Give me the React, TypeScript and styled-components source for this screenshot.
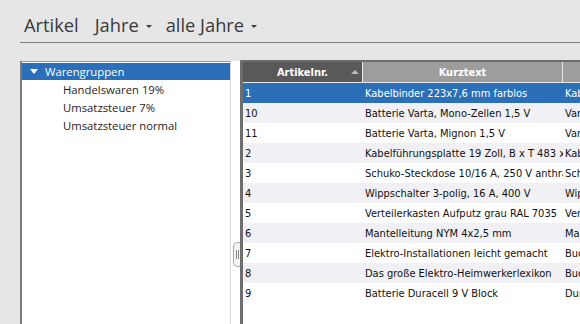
import React from "react";
import styled, { createGlobalStyle } from "styled-components";

const GlobalStyle = createGlobalStyle`
  html, body {
    margin: 0;
    padding: 0;
    background: #e6e6e6;
    overflow: hidden;
  }
`;

const Page = styled.div`
  width: 580px;
  height: 324px;
  display: flex;
  flex-direction: column;
  background: #e6e6e6;
`;

const TitleBar = styled.div`
  margin-left: 20px;
  height: 43px;
  border-bottom: 1px solid #7f7f7f;
  display: flex;
  align-items: flex-end;
  padding-left: 4px;
  padding-bottom: 4px;
  box-sizing: border-box;
  font-family: "Open Sans", "Noto Sans", sans-serif;
  font-size: 18.3px;
  color: #3a3a3a;
  gap: 14px;
`;

const Title = styled.span`
  line-height: 26px;
  margin-right: 2px;
`;

const Dropdown = styled.span`
  display: flex;
  align-items: center;
  gap: 7px;
  line-height: 26px;
`;

const Caret = styled.span`
  width: 0;
  height: 0;
  border-left: 3px solid transparent;
  border-right: 3px solid transparent;
  border-top: 3px solid #3a3a3a;
  margin-top: 2px;
`;

const Body = styled.div`
  flex: 1;
  margin-top: 17px;
  margin-left: 20px;
  display: flex;
  min-height: 0;
`;

const TreePanel = styled.div`
  width: 208px;
  margin-top: 1px;
  background: #fff;
  border-left: 2px solid #7c7c7c;
  border-top: 1px solid #9a9a9a;
  border-right: 1px solid #d6d6d6;
  font-family: "Open Sans", "Noto Sans", sans-serif;
  font-size: 11.3px;
  color: #2a1a1a;
  padding-top: 1px;
`;

const TreeNode = styled.div<{ $selected?: boolean; $level: number }>`
  height: ${(p) => (p.$selected ? 17 : 18)}px;
  display: flex;
  align-items: center;
  padding-left: ${(p) => (p.$level === 0 ? 8 : 41)}px;
  gap: 7px;
  background: ${(p) => (p.$selected ? "#2a6fb7" : "transparent")};
  color: ${(p) => (p.$selected ? "#fff" : "inherit")};
  white-space: nowrap;
`;

const Expander = styled.span`
  width: 0;
  height: 0;
  border-left: 4px solid transparent;
  border-right: 4px solid transparent;
  border-top: 5px solid #fff;
`;

const Splitter = styled.div`
  width: 9px;
  margin-top: 1px;
  background: #fff;
  display: flex;
  flex-direction: column;
  padding-top: 181px;
  box-sizing: border-box;
`;

const Grip = styled.div`
  width: 8px;
  height: 23px;
  margin-left: 2px;
  border: 1px solid #a8a8a8;
  border-right: none;
  border-radius: 5px 0 0 5px;
  background: #f4f4f4;
  display: flex;
  align-items: center;
  justify-content: center;
  gap: 1px;
`;

const GripLine = styled.span`
  width: 1px;
  height: 9px;
  background: #8a8a8a;
`;

const TablePanel = styled.div`
  flex: 1;
  background: #fff;
  border-left: 3px solid #6e6e6e;
  border-top: 2px solid #6e6e6e;
  overflow: hidden;
  font-family: "DejaVu Sans Condensed", "DejaVu Sans", sans-serif;
  font-size: 11px;
`;

const Grid = styled.div`
  display: grid;
  grid-template-columns: 120px 200px 200px;
`;

const HeaderCell = styled.div<{ $sorted?: boolean }>`
  height: 21px;
  box-sizing: border-box;
  background: ${(p) => (p.$sorted ? "#595959" : "#9d9d9d")};
  border-right: 1px solid #e8e8e8;
  border-bottom: 1px solid #e8e8e8;
  color: #fff;
  font-weight: bold;
  display: flex;
  align-items: center;
  justify-content: center;
  position: relative;
`;

const SortArrow = styled.span`
  position: absolute;
  right: 3px;
  top: 8px;
  width: 0;
  height: 0;
  border-left: 4px solid transparent;
  border-right: 4px solid transparent;
  border-bottom: 4px solid #bdbdbd;
`;

const Cell = styled.div<{ $selected?: boolean; $alt?: boolean }>`
  height: 20px;
  padding-left: 2px;
  display: flex;
  align-items: center;
  white-space: nowrap;
  overflow: hidden;
  background: ${(p) => (p.$selected ? "#2a6fb7" : p.$alt ? "#f0f0f5" : "#fff")};
  color: ${(p) => (p.$selected ? "#fff" : "#111")};
`;

const rows: [string, string, string][] = [
  ["1", "Kabelbinder 223x7,6 mm farblos", "Kabelbinder"],
  ["10", "Batterie Varta, Mono-Zellen 1,5 V", "Varta"],
  ["11", "Batterie Varta, Mignon 1,5 V", "Varta"],
  ["2", "Kabelführungsplatte 19 Zoll,  B x T 483 x 44 mm", "Kabelführung"],
  ["3", "Schuko-Steckdose 10/16 A, 250 V anthrazit", "Schuko"],
  ["4", "Wippschalter 3-polig, 16 A, 400 V", "Wippschalter"],
  ["5", "Verteilerkasten Aufputz grau RAL 7035", "Verteiler"],
  ["6", "Mantelleitung NYM 4x2,5 mm", "Mantelleitung"],
  ["7", "Elektro-Installationen leicht gemacht", "Buch"],
  ["8", "Das große Elektro-Heimwerkerlexikon", "Buch"],
  ["9", "Batterie Duracell 9 V Block", "Duracell"],
];

export default function App() {
  return (
    <>
      <GlobalStyle />
      <Page>
        <TitleBar>
          <Title>Artikel</Title>
          <Dropdown>
            Jahre <Caret />
          </Dropdown>
          <Dropdown>
            alle Jahre <Caret />
          </Dropdown>
        </TitleBar>
        <Body>
          <TreePanel>
            <TreeNode $level={0} $selected>
              <Expander />
              Warengruppen
            </TreeNode>
            <TreeNode $level={1}>Handelswaren 19%</TreeNode>
            <TreeNode $level={1}>Umsatzsteuer 7%</TreeNode>
            <TreeNode $level={1}>Umsatzsteuer normal</TreeNode>
          </TreePanel>
          <Splitter>
            <Grip>
              <GripLine />
              <GripLine />
              <GripLine />
            </Grip>
          </Splitter>
          <TablePanel>
            <Grid>
              <HeaderCell $sorted>
                Artikelnr.
                <SortArrow />
              </HeaderCell>
              <HeaderCell>Kurztext</HeaderCell>
              <HeaderCell>Bezeichnung</HeaderCell>
              {rows.map((r, i) =>
                r.map((v, j) => (
                  <Cell key={i + "-" + j} $selected={i === 0} $alt={i % 2 === 1}>
                    {v}
                  </Cell>
                ))
              )}
            </Grid>
          </TablePanel>
        </Body>
      </Page>
    </>
  );
}
